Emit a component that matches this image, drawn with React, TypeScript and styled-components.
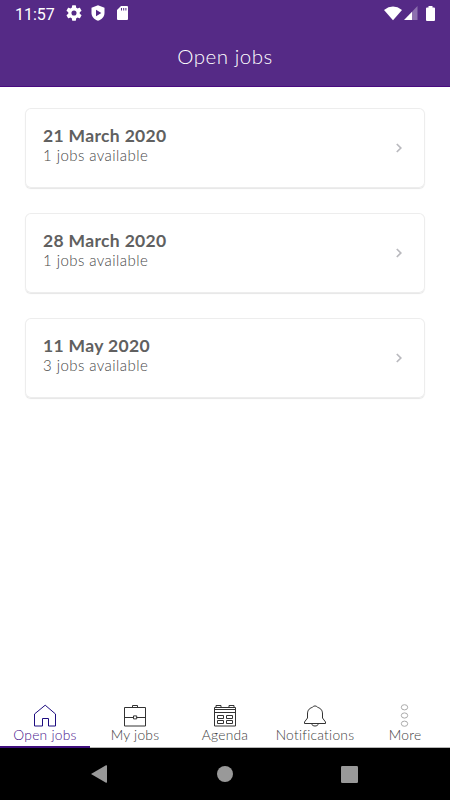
import React from "react";
import styled, { createGlobalStyle } from "styled-components";

const GlobalStyle = createGlobalStyle`
  * { box-sizing: border-box; }
  body { margin: 0; background: #fff; font-family: Lato, "Open Sans", sans-serif; }
`;

const Screen = styled.div`
  width: 450px;
  height: 800px;
  display: flex;
  flex-direction: column;
  overflow: hidden;
  background: #fff;
`;

const StatusBar = styled.div`
  flex: none;
  height: 27px;
  display: flex;
  align-items: flex-start;
  justify-content: space-between;
  padding: 0 13px 0 15px;
  background: #552a86;
  color: #fff;
  font: 400 16px/27px Roboto, sans-serif;
`;

const StatusGroup = styled.div<{ $gap: number }>`
  display: flex;
  align-items: center;
  gap: ${(p) => p.$gap}px;
  height: 26px;
  svg { display: block; }
`;

const Clock = styled.span`
  width: 43px;
  white-space: nowrap;
  padding-top: 2px;
`;

const Header = styled.header`
  flex: none;
  height: 60px;
  display: flex;
  justify-content: center;
  background: #552a86;
  border-bottom: 1px solid #490b80;
`;

const Title = styled.h1`
  margin: 0;
  padding-top: 17px;
  color: #fff;
  font-size: 20.5px;
  font-weight: 300;
  line-height: 24px;
  letter-spacing: 0.5px;
`;

const JobList = styled.main`
  flex: 1;
  display: flex;
  flex-direction: column;
  gap: 25px;
  padding: 21px 25px 0;
`;

const Card = styled.article`
  height: 80px;
  display: flex;
  align-items: center;
  justify-content: space-between;
  padding: 0 22px 0 18px;
  border-radius: 6px;
  background: #fff;
  box-shadow: inset 0 0 0 1px #ededed, 0 1px 1px #e6e6e6;
`;

const CardText = styled.div`
  height: 80px;
  padding-top: 17px;
`;

const JobDate = styled.div`
  color: #606060;
  font-size: 17.5px;
  font-weight: 700;
  line-height: 21px;
  letter-spacing: 0.34px;
`;

const JobCount = styled.div`
  color: #484848;
  font-size: 15px;
  font-weight: 300;
  line-height: 19px;
  letter-spacing: 0.43px;
`;

const TabBar = styled.nav`
  flex: none;
  height: 48px;
  display: grid;
  grid-template-columns: repeat(5, 90px);
`;

const Tab = styled.div<{ $active?: boolean }>`
  display: flex;
  flex-direction: column;
  align-items: center;
  border-bottom: ${(p) => (p.$active ? "2px solid #3f0f7d" : "1px solid #b5b5b5")};
  color: ${(p) => (p.$active ? "#46128c" : "#3c3c3c")};
  font-size: 13.8px;
  font-weight: 300;
  line-height: 16px;
  letter-spacing: 0.25px;
  white-space: nowrap;
  padding-top: 4px;
  svg { flex: none; display: block; }
`;

const SystemNav = styled.div`
  flex: none;
  height: 52px;
  display: flex;
  align-items: center;
  justify-content: space-between;
  padding: 0 92px 0 91px;
  background: #000;
`;

const Line = ({ color = "#333", children }: { color?: string; children: React.ReactNode }) => (
  <svg width="24" height="23" viewBox="0 0 24 23" fill="none" stroke={color} strokeWidth="1">
    {children}
  </svg>
);

const HomeIcon = () => (
  <Line color="#1d0c80">
    <path d="M1.5 22V10L12.2 1.2 22.5 10V22H15.5V14.5H9.5V22Z" />
  </Line>
);

const CaseIcon = () => (
  <Line>
    <path d="M1.5 3.5H22.5V22H1.5ZM9.5 3.5V1.5H14.5V3.5M1.5 13.5H10.5M13.5 13.5H22.5M10.5 11.9H13.7V14.9H10.5Z" />
  </Line>
);

const CalendarIcon = () => (
  <Line>
    <path d="M1.5 3.5H22.5V22H1.5ZM1.5 5.5H22.5M1.5 8.5H22.5M3 3.5V1.5H8V3.5M16 3.5V1.5H21V3.5" />
    <path d="M4.5 11.5H10.5V14.5H4.5ZM13.5 11.5H19.5V14.5H13.5ZM4.5 16.5H10.5V19.5H4.5ZM13.5 16.5H19.5V19.5H13.5Z" />
  </Line>
);

const BellIcon = () => (
  <Line>
    <path d="M9.5 3.3A2.7 2.2 0 0 1 14.5 3.3C18.5 4.5 19.5 7 19.5 10V14L22.5 18V19.5H1.5V18L4.5 14V10C4.5 7 5.5 4.5 9.5 3.3Z" />
    <path d="M8.5 19.5C9 21.5 10.5 22 12 22S15 21.5 15.5 19.5" />
  </Line>
);

const MoreIcon = () => (
  <Line color="#aaa">
    <ellipse cx="11.5" cy="3.3" rx="3.2" ry="2.6" />
    <ellipse cx="11.5" cy="11.5" rx="3.2" ry="2.6" />
    <ellipse cx="11.5" cy="19.7" rx="3.2" ry="2.6" />
  </Line>
);

const jobs = [
  { date: "21 March 2020", count: 1 },
  { date: "28 March 2020", count: 1 },
  { date: "11 May 2020", count: 3 },
];

const tabs = [
  { label: "Open jobs", icon: HomeIcon },
  { label: "My jobs", icon: CaseIcon },
  { label: "Agenda", icon: CalendarIcon },
  { label: "Notifications", icon: BellIcon },
  { label: "More", icon: MoreIcon },
];

export default function App() {
  return (
    <Screen>
      <GlobalStyle />
      <StatusBar>
        <StatusGroup $gap={8}>
          <Clock>11:57</Clock>
          <svg width="16" height="16" viewBox="2 2 20 20" fill="#fff">
            <path d="M19.14 12.94c.04-.3.06-.61.06-.94s-.02-.64-.07-.94l2.03-1.58a.49.49 0 0 0 .12-.61l-1.92-3.32a.49.49 0 0 0-.59-.22l-2.39.96a7 7 0 0 0-1.62-.94l-.36-2.54a.48.48 0 0 0-.48-.41h-3.84a.48.48 0 0 0-.47.41l-.36 2.54c-.59.24-1.13.57-1.62.94l-2.39-.96a.48.48 0 0 0-.59.22L2.74 8.87a.48.48 0 0 0 .12.61l2.03 1.58a6 6 0 0 0 0 1.88l-2.03 1.58a.49.49 0 0 0-.12.61l1.92 3.32c.12.22.37.29.59.22l2.39-.96c.5.38 1.03.7 1.62.94l.36 2.54c.05.24.24.41.48.41h3.84c.24 0 .44-.17.47-.41l.36-2.54a7 7 0 0 0 1.62-.94l2.39.96c.22.08.47 0 .59-.22l1.92-3.32a.48.48 0 0 0-.12-.61zM12 15.2a3.2 3.2 0 1 1 0-6.4 3.2 3.2 0 0 1 0 6.4z" />
          </svg>
          <svg width="16" height="16" viewBox="0 0 16 16">
            <path fill="#fff" d="M8 .3 14.5 2.8V7.8C14.5 11.6 11.8 14.8 8 15.8 4.2 14.8 1.5 11.6 1.5 7.8V2.8Z" />
            <path fill="#552a86" d="M6 4.7 11.3 8 6 11.3Z" />
          </svg>
          <svg width="16" height="16" viewBox="0 0 16 16">
            <path fill="#fff" d="M7 1H13Q14 1 14 2V14Q14 15 13 15H4Q3 15 3 14V5Z" />
            <path stroke="#552a86" strokeWidth="1" d="M7.5 3V5.5M9.7 3V5.5M11.9 3V5.5" />
          </svg>
        </StatusGroup>
        <StatusGroup $gap={2}>
          <svg width="18" height="15" viewBox="0 0 18 15">
            <path fill="#fff" d="M0 4Q9-2.8 18 4L9 14.3Z" />
          </svg>
          <svg width="14" height="14" viewBox="0 0 14 14">
            <path fill="#fff" d="M0 14 8 5.8V14Z" />
            <path fill="#8d70af" d="M8 5.8 13.5 0V14H8Z" />
          </svg>
          <svg width="17" height="15" viewBox="0 0 17 15">
            <path fill="#fff" d="M8.5 0H12.5V1.5H14Q15 1.5 15 2.5V14Q15 15 14 15H7Q6 15 6 14V2.5Q6 1.5 7 1.5H8.5Z" />
          </svg>
        </StatusGroup>
      </StatusBar>
      <Header>
        <Title>Open jobs</Title>
      </Header>
      <JobList>
        {jobs.map((job) => (
          <Card key={job.date}>
            <CardText>
              <JobDate>{job.date}</JobDate>
              <JobCount>{job.count} jobs available</JobCount>
            </CardText>
            <svg width="7" height="10" viewBox="0 0 7 10" fill="none" stroke="#b9b9be" strokeWidth="1.7">
              <path d="M.8 1 4.8 5 .8 9" />
            </svg>
          </Card>
        ))}
      </JobList>
      <TabBar>
        {tabs.map(({ label, icon: Icon }, i) => (
          <Tab key={label} $active={i === 0}>
            <Icon />
            {label}
          </Tab>
        ))}
      </TabBar>
      <SystemNav>
        <svg width="16" height="18" viewBox="0 0 16 18">
          <path fill="#999" d="M0 9 15 .3Q16 0 16 1V17Q16 18 15 17.7Z" />
        </svg>
        <svg width="17" height="16" viewBox="0 0 17 16">
          <circle cx="9" cy="8" r="8" fill="#999" />
        </svg>
        <svg width="17" height="17" viewBox="0 0 17 17">
          <rect width="17" height="17" rx="1.3" fill="#999" />
        </svg>
      </SystemNav>
    </Screen>
  );
}
